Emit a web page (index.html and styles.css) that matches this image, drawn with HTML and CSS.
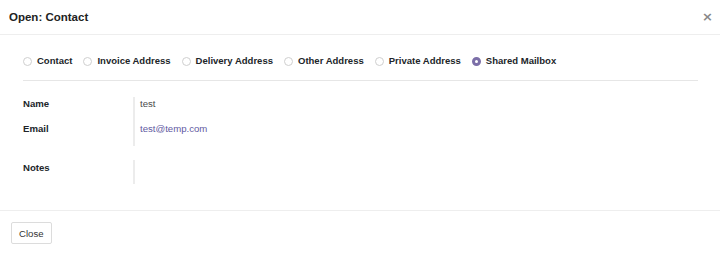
FILE: index.html
```html
<!DOCTYPE html>
<html lang="en">
<head>
    <meta charset="UTF-8">
    <meta name="viewport" content="width=device-width, initial-scale=1.0">
    <title>Open: Contact</title>
    <link rel="stylesheet" href="styles.css">
</head>
<body>

<div class="modal">
    <div class="modal-header">
        <h4 class="modal-title">Open: Contact</h4>
        <button class="close" type="button">×</button>
    </div>

    <div class="modal-body">
        <div class="radios">
            <label class="radio"><input type="radio" name="type"> Contact</label>
            <label class="radio"><input type="radio" name="type"> Invoice Address</label>
            <label class="radio"><input type="radio" name="type"> Delivery Address</label>
            <label class="radio"><input type="radio" name="type"> Other Address</label>
            <label class="radio"><input type="radio" name="type"> Private Address</label>
            <label class="radio"><input type="radio" name="type" checked> Shared Mailbox</label>
        </div>

        <div class="group">
            <div class="labels">
                <span class="label">Name</span>
                <span class="label">Email</span>
            </div>
            <div class="values">
                <span class="value">test</span>
                <a class="value link" href="#">test@temp.com</a>
            </div>
        </div>

        <div class="group notes">
            <div class="labels">
                <span class="label">Notes</span>
            </div>
            <div class="values"></div>
        </div>
    </div>

    <div class="modal-footer">
        <button class="btn" type="button">Close</button>
    </div>
</div>

</body>
</html>
```

FILE: styles.css
```css
body { margin: 0; background: #fff; color: #212529; font-family: "Liberation Sans", Arial, sans-serif; font-size: 9.6px; }

.modal-header { height: 34px; display: flex; align-items: center; justify-content: space-between; padding: 0 7px 0 9px; border-bottom: 1px solid #eee; }
.modal-title { margin: 0; font-size: 11.5px; font-weight: bold; color: #222; }
.close { border: none; background: none; padding: 0; font-family: "DejaVu Sans", sans-serif; font-size: 13px; font-weight: bold; color: #888; line-height: 12px; cursor: pointer; }

.modal-body { padding: 0 22px 0 23px; }

.radios { display: flex; align-items: center; padding: 20px 0 13px; line-height: 12px; font-size: 9.52px; border-bottom: 1px solid #e6e6e6; }
.radio { display: flex; align-items: center; font-weight: bold; margin-right: 11px; }
.radio input { appearance: none; box-sizing: border-box; width: 9px; height: 9px; margin: 0 5px 0 0; border: 1px solid #cfcfcf; border-radius: 50%; background: #fff; }
.radio input:checked { border: 3px solid #7c6fa8; }

.group { display: flex; margin-top: 16px; line-height: 12px; }
.labels { width: 110px; display: flex; flex-direction: column; gap: 13px; padding-top: 1px; }
.label { font-weight: bold; }
.values { flex: 1; display: flex; flex-direction: column; gap: 13px; padding: 1px 0 11px 5px; border-left: 2px solid #ececec; }
.value { color: #4c4c4c; }
.link { color: #5f5aa2; text-decoration: none; }

.group.notes { margin-top: 14px; }
.notes .labels { padding-top: 2px; }
.notes .values { height: 24px; box-sizing: border-box; padding: 0; }

.modal-footer { margin-top: 26px; padding: 11px; border-top: 1px solid #eee; }
.btn { height: 22px; padding: 0 7px; font-family: "Liberation Sans", Arial, sans-serif; font-size: 9.6px; color: #333; background: #fff; border: 1px solid #dcdcdc; border-radius: 2px; cursor: pointer; }
```
